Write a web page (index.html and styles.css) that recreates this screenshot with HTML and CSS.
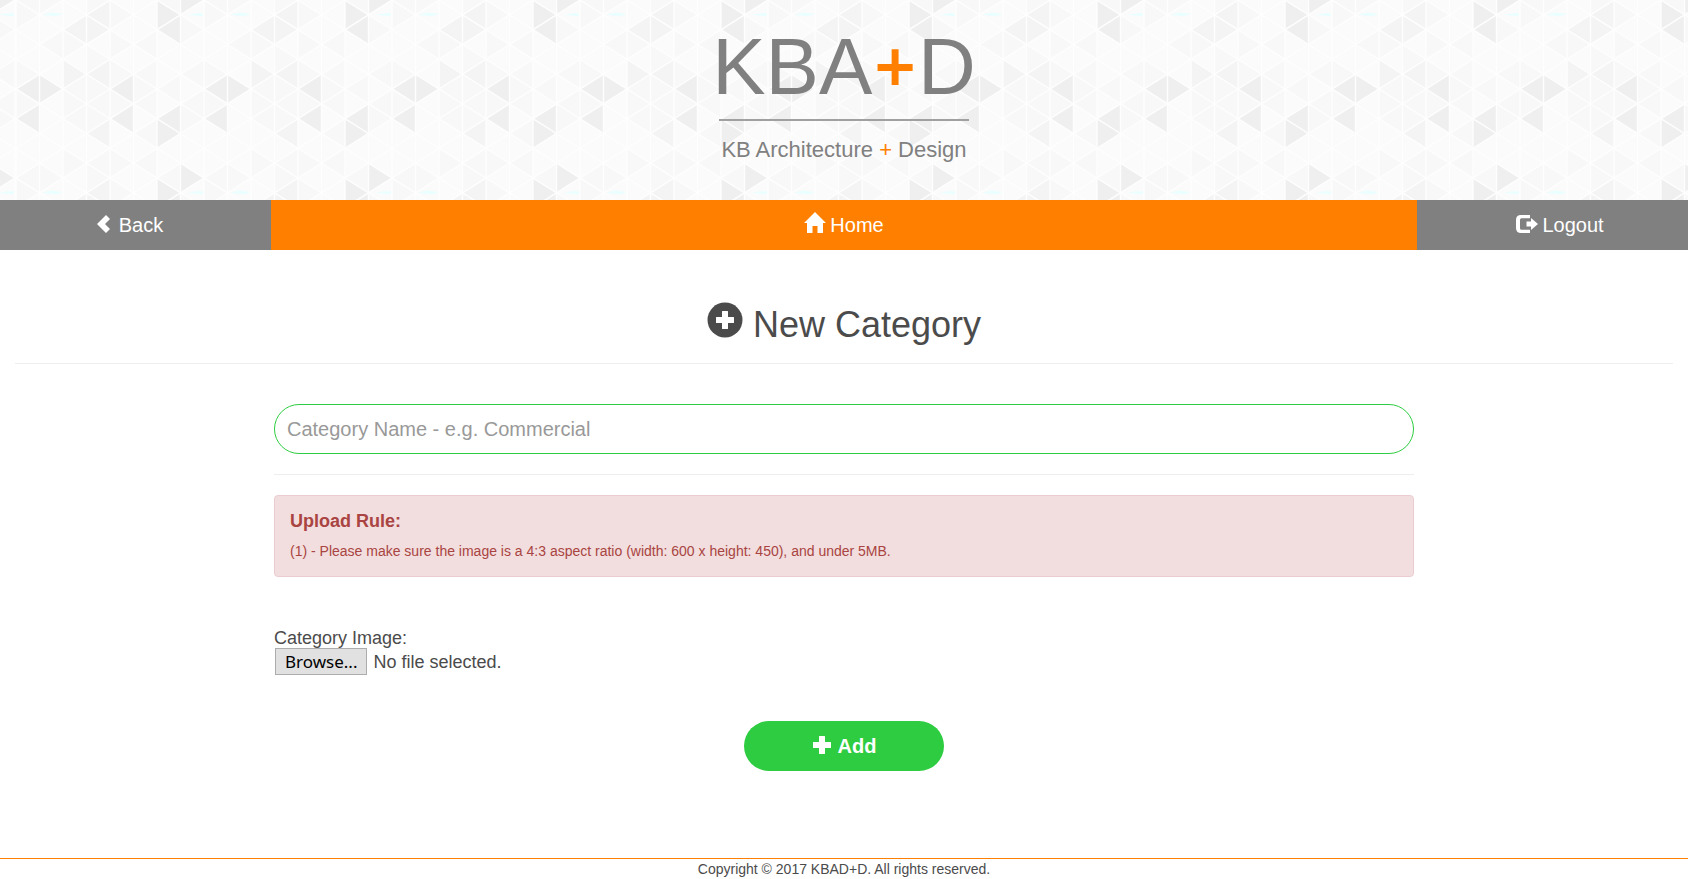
FILE: index.html
```html
<!DOCTYPE html>
<html lang="en">
<head>
<meta charset="utf-8">
<title>KBA+D - New Category</title>
<link rel="stylesheet" href="styles.css">
</head>
<body>
<header class="banner">
  <svg class="banner-pattern" aria-hidden="true">
    <defs>
      <!-- One tile: 8 columns by 12 half-rows of triangles -->
      <pattern id="triangles" width="8" height="12" patternUnits="userSpaceOnUse" patternTransform="translate(16 0) scale(23.5 14.833)">
        <path fill="#fbfbfb" d="M0 0h8v12H0z"/>
        <path fill="#f8f8f8" d="M1 1l-1-1v2zM1 5l-1-1v2zM1 7l-1-1v2zM0 0l1-1v2zM0 12l1-1v2zM1 3l1-1v2zM2 0l-1-1v2zM2 12l-1-1v2zM2 6l1-1v2zM3 7l-1-1v2zM2 8l1-1v2zM3 11l-1-1v2zM3 3l-1-1v2zM4 4l-1-1v2zM4 6l-1-1v2zM3 7l1-1v2zM4 8l-1-1v2zM3 11l1-1v2zM4 0l-1-1v2zM4 12l-1-1v2zM5 1l-1-1v2zM5 3l-1-1v2zM5 5l-1-1v2zM5 7l-1-1v2zM5 11l-1-1v2zM5 3l1-1v2zM5 5l1-1v2zM6 6l-1-1v2zM5 7l1-1v2zM5 9l1-1v2zM5 11l1-1v2zM6 6l1-1v2zM6 0l1-1v2zM6 12l1-1v2zM8 2l-1-1v2zM7 5l1-1v2zM7 7l1-1v2zM8 8l-1-1v2z"/>
        <path fill="#f4f4f4" d="M2 2l1-1v2zM4 2l-1-1v2zM3 5l-1-1v2zM3 5l1-1v2zM3 1l1-1v2zM3 9l1-1v2z"/>
        <path fill="#efefef" d="M0 6l1-1v2zM2 6l-1-1v2zM4 6l1-1v2zM0 8l1-1v2zM4 8l1-1v2zM6 8l1-1v2zM7 9l-1-1v2zM8 0l-1-1v2zM8 12l-1-1v2zM7 1l-1-1v2zM6 2l1-1v2z"/>
        <path fill="#eaffff" d="M1.100 1l.4-.150.500.100-.3.150zM7.300 1l.4-.100h.250v.200z"/>
        <path fill="none" stroke="#fefefe" stroke-width=".06" d="M0 0v12M1 0v12M2 0v12M3 0v12M4 0v12M5 0v12M6 0v12M7 0v12M8 0v12"/>
        <path fill="none" stroke="#fefefe" stroke-width=".085" d="M0 0l8 8M0 2l8 8M0 4l8 8M0 6l6 6M0 8l4 4M0 10l2 2M2 0l6 6M4 0l4 4M6 0l2 2M0 2l2-2M0 4l4-4M0 6l6-6M0 8l8-8M0 10l8-8M0 12l8-8M2 12l6-6M4 12l4-4M6 12l2-2"/>
      </pattern>
    </defs>
    <rect width="100%" height="100%" fill="url(#triangles)"/>
  </svg>
  <div class="logo">
    <div class="logo-name">KBA<span class="accent logo-plus">+</span>D</div>
    <div class="logo-tagline">KB Architecture <span class="accent">+</span> Design</div>
  </div>
</header>

<nav class="nav">
  <a class="nav-link nav-back" href="#"><svg class="icon-nav" viewBox="0 0 22 22" aria-hidden="true"><path d="M13 2l4 4-5 5 5 5-4 4-9-9z"/></svg><span>Back</span></a>
  <a class="nav-link nav-home" href="#"><svg class="icon-nav icon-home" viewBox="0 0 22 22" aria-hidden="true"><path d="M11 0l11 11h-3v9.500q0 .5-.5.5h-5v-7h-5v7h-5q-.5 0-.5-.5V11H0z"/></svg><span>Home</span></a>
  <a class="nav-link nav-logout" href="#"><svg class="icon-nav" viewBox="0 0 22 22" aria-hidden="true"><path d="M14 2v3.200H5.500q-1.500 0-1.500 1.500v8.600q0 1.500 1.500 1.500H14V20H5q-5 0-5-5V7q0-5 5-5z"/><path d="M10.500 8.500H15V5l7 6-7 6v-3.500h-4.500z"/></svg><span>Logout</span></a>
</nav>

<main class="page">
  <h1 class="title"><svg class="icon-title" viewBox="0 0 36 36" aria-hidden="true"><circle cx="18" cy="18" r="17.500"/><path class="icon-cut" d="M15.500 9h5q.5 0 .5.500V15h5.500q.5 0 .5.500v5q0 .5-.5.500H21v5.500q0 .5-.5.500h-5q-.5 0-.5-.500V21H9.500q-.5 0-.5-.500v-5q0-.5.500-.500H15V9.500q0-.5.500-.500z"/></svg><span>New Category</span></h1>

  <form class="form">
    <input class="name-input" type="text" placeholder="Category Name - e.g. Commercial" aria-label="Category Name">
    <hr class="rule">
    <section class="alert">
      <h2 class="alert-title">Upload Rule:</h2>
      <p class="alert-text">(1) - Please make sure the image is a 4:3 aspect ratio (width: 600 x height: 450), and under 5MB.</p>
    </section>
    <label class="file-label" for="category-image">Category Image:</label>
    <div class="file">
      <span class="file-button">Browse...</span>
      <span>No file selected.</span>
      <input class="file-input" id="category-image" type="file">
    </div>
    <button class="add" type="submit"><svg class="icon-add" viewBox="0 0 20 20" aria-hidden="true"><path d="M7.500 1h5q.5 0 .5.500V7h5.500q.5 0 .5.500v5q0 .5-.5.500H13v5.500q0 .5-.5.500h-5q-.5 0-.5-.500V13H1.500q-.5 0-.5-.500v-5q0-.5.500-.500H7V1.500q0-.5.500-.500z"/></svg><span>Add</span></button>
  </form>
</main>

<footer class="footer">Copyright © 2017 KBAD+D. All rights reserved.</footer>
</body>
</html>
```
FILE: styles.css
```css
* {
  box-sizing: border-box;
}

body {
  margin: 0;
  min-height: 100vh;
  display: flex;
  flex-direction: column;
  background: #fff;
  color: #4b4b4b;
  font-family: "Liberation Sans", Arial, sans-serif;
  font-size: 18px;
  line-height: 26px;
}

svg {
  fill: currentColor;
  flex: none;
}

.banner {
  position: relative;
  height: 200px;
  display: flex;
  justify-content: center;
}

.banner-pattern {
  position: absolute;
  inset: 0;
  width: 100%;
  height: 100%;
}

.logo {
  position: relative;
  display: flex;
  flex-direction: column;
  align-items: center;
  padding-top: 21px;
  color: #808080;
}

.logo-name {
  font-size: 80px;
  line-height: 92px;
}

.logo-tagline {
  width: 250px;
  margin-top: 6px;
  padding-top: 16px;
  border-top: 2px solid #a0a0a0;
  font-size: 22px;
  text-align: center;
  white-space: nowrap;
}

.accent {
  color: #ff8000;
}

.logo-plus {
  padding: 0 3px;
  font-size: 68px;
  line-height: 1;
  vertical-align: 4px;
  -webkit-text-stroke: 2px #ff8000;
}

.nav {
  display: flex;
  height: 50px;
}

.nav-link {
  display: flex;
  flex: 1;
  align-items: center;
  justify-content: center;
  gap: 4px;
  background: #808080;
  color: #fff;
  font-size: 20px;
  text-decoration: none;
}

.nav-back {
  padding-right: 15px;
}

.nav-home {
  flex: 0 1 1146px;
  background: #ff8000;
}

.nav-logout {
  padding-left: 15px;
}

.icon-nav {
  width: 22px;
  height: 22px;
  margin-bottom: 2px;
}

.icon-home {
  margin-bottom: 4px;
}

.page {
  padding: 0 15px;
}

.title {
  display: flex;
  align-items: center;
  justify-content: center;
  gap: 10px;
  margin: 0;
  padding: 51px 0 14px;
  border-bottom: 1px solid #eee;
  font-size: 36px;
  font-weight: 400;
  line-height: 48px;
}

.icon-title {
  width: 36px;
  height: 36px;
  margin-bottom: 10px;
}

.icon-cut {
  fill: #fff;
}

.form {
  display: flex;
  flex-direction: column;
  max-width: 1140px;
  margin: 0 auto;
  padding-top: 40px;
}

.name-input {
  height: 50px;
  padding: 0 12px;
  border: 1px solid #2ecc40;
  border-radius: 25px;
  background: #fff;
  color: #4b4b4b;
  font: 20px "Liberation Sans", Arial, sans-serif;
}

.name-input::placeholder {
  color: #999;
}

.rule {
  width: 100%;
  margin: 20px 0;
  border: 0;
  border-top: 1px solid #eee;
}

.alert {
  padding: 12px 15px 14px;
  border: 1px solid #ebccd1;
  border-radius: 4px;
  background: #f2dede;
  color: #a94442;
}

.alert-title {
  margin: 0;
  font-size: 18px;
  line-height: 26px;
}

.alert-text {
  margin: 6px 0 0;
  font-size: 14px;
  line-height: 22px;
}

.file-label {
  margin-top: 51px;
  line-height: 20px;
}

.file {
  position: relative;
  display: flex;
  align-items: center;
  align-self: flex-start;
  gap: 6px;
  padding-left: 1px;
}

.file-button {
  padding: 0 9px;
  border: 1px solid #adadad;
  background: #e1e1e1;
  color: #000;
  font-family: "Noto Sans", sans-serif;
  font-size: 17px;
  line-height: 25px;
}

.file-input {
  position: absolute;
  inset: 0;
  width: 100%;
  opacity: 0;
}

.add {
  display: flex;
  align-items: center;
  justify-content: center;
  align-self: center;
  gap: 6px;
  width: 200px;
  height: 50px;
  margin-top: 46px;
  border: 0;
  border-radius: 25px;
  background: #2ecc40;
  color: #fff;
  font: bold 20px "Liberation Sans", Arial, sans-serif;
}

.icon-add {
  width: 20px;
  height: 20px;
  margin-bottom: 2px;
}

.footer {
  margin-top: auto;
  border-top: 1px solid #ff8000;
  font-size: 14px;
  line-height: 20px;
  text-align: center;
}
```
